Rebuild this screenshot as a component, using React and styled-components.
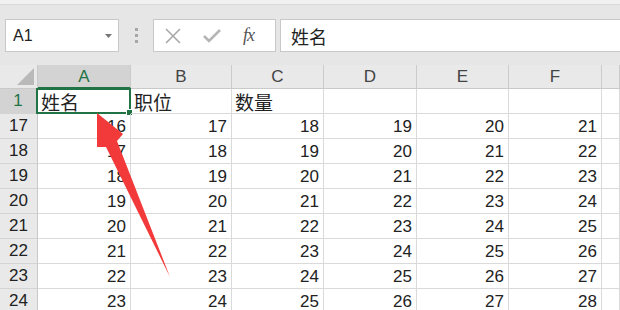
import React from 'react';
import styled, { createGlobalStyle } from 'styled-components';

const GlobalStyle = createGlobalStyle`
  html, body {
    margin: 0;
    padding: 0;
    background: #e6e6e6;
    overflow: hidden;
  }
  body {
    font-family: "Liberation Sans", "Noto Sans CJK SC", sans-serif;
  }
`;

const Page = styled.div`
  position: relative;
  width: 620px;
  height: 310px;
  overflow: hidden;
  background: #e6e6e6;
`;

// thin ribbon remnant at the very top
const TopStrip = styled.div`
  height: 4px;
  background: #f1f1f1;
  border-bottom: 1px solid #d9d9d9;
`;

const FormulaBar = styled.div`
  display: flex;
  align-items: flex-start;
  height: 46px;
  padding-top: 14px;
  padding-left: 5px;
`;

const NameBox = styled.div`
  box-sizing: border-box;
  width: 114px;
  height: 33px;
  background: #fff;
  border: 1px solid #c8c8c8;
  display: flex;
  align-items: center;
  justify-content: space-between;
  padding: 0 6px 0 7px;
  font-size: 16px;
  color: #222;
`;

const Grip = styled.div`
  width: 34px;
  height: 33px;
  display: flex;
  flex-direction: column;
  align-items: center;
  justify-content: center;
  gap: 3px;
`;

const GripDot = styled.span`
  width: 3px;
  height: 3px;
  background: #a6a6a6;
`;

const ButtonBox = styled.div`
  box-sizing: border-box;
  width: 123px;
  height: 33px;
  background: #fff;
  border: 1px solid #c8c8c8;
  display: flex;
  align-items: center;
  padding-left: 11px;
  gap: 22px;
`;

const Fx = styled.span`
  font-family: "Liberation Serif", serif;
  font-style: italic;
  font-size: 18px;
  color: #555;
  letter-spacing: -1px;
`;

const FormulaInput = styled.div`
  box-sizing: border-box;
  flex: 1;
  margin-left: 4px;
  margin-right: -4px;
  height: 33px;
  background: #fff;
  border: 1px solid #c8c8c8;
  display: flex;
  align-items: center;
  padding-left: 10px;
  font-size: 18px;
  color: #222;
`;

const Sheet = styled.div`
  display: grid;
  grid-template-columns: 38px 93px 101px 92px 93px 92px 93px 1fr;
  grid-template-rows: 24px repeat(9, 25px);
  background: #fff;
`;

const Corner = styled.div`
  background: #e9e9e9;
  border-right: 1px solid #c9c9c9;
  border-bottom: 1px solid #c9c9c9;
  display: flex;
  align-items: flex-end;
  justify-content: flex-end;
  padding: 0 3px 3px 0;
`;

const ColHead = styled.div`
  box-sizing: border-box;
  background: ${p => (p.$active ? '#d3d3d3' : '#e9e9e9')};
  color: ${p => (p.$active ? '#217346' : '#444')};
  border-right: 1px solid #cbcbcb;
  border-bottom: ${p => (p.$active ? '2px solid #217346' : '1px solid #c9c9c9')};
  display: flex;
  align-items: center;
  justify-content: center;
  font-size: 17px;
  padding-top: 1px;
`;

const RowHead = styled.div`
  box-sizing: border-box;
  background: ${p => (p.$active ? '#d3d3d3' : '#e9e9e9')};
  color: ${p => (p.$active ? '#217346' : '#222')};
  border-right: ${p => (p.$active ? '2px solid #217346' : '1px solid #c9c9c9')};
  border-bottom: 1px solid #d4d4d4;
  display: flex;
  align-items: center;
  justify-content: center;
  font-size: 17px;
`;

const Cell = styled.div`
  position: relative;
  box-sizing: border-box;
  border-right: 1px solid #dadada;
  border-bottom: 1px solid #dadada;
  display: flex;
  align-items: center;
  justify-content: ${p => (p.$num ? 'flex-end' : 'flex-start')};
  padding: ${p => (p.$num ? '1px 4px 0 0' : '1px 0 0 3px')};
  font-size: ${p => (p.$num ? '17px' : '19px')};
  color: #222;
  white-space: nowrap;
`;

const Selection = styled.div`
  position: absolute;
  left: -2px;
  top: -1px;
  right: -1px;
  bottom: -1px;
  border: 2px solid #217346;
  pointer-events: none;
`;

const FillHandle = styled.div`
  position: absolute;
  right: -4px;
  bottom: -4px;
  width: 5px;
  height: 5px;
  background: #217346;
  border: 1px solid #fff;
`;

const Arrow = styled.svg`
  position: absolute;
  left: 0;
  top: 0;
  pointer-events: none;
`;

const cols = ['A', 'B', 'C', 'D', 'E', 'F', ''];
const rows = [17, 18, 19, 20, 21, 22, 23, 24];

export default function App() {
  return (
    <Page>
      <GlobalStyle />
      <TopStrip />
      <FormulaBar>
        <NameBox>
          <span>A1</span>
          <svg width="7" height="4" viewBox="0 0 7 4">
            <path d="M0 0h7L3.5 4z" fill="#777" />
          </svg>
        </NameBox>
        <Grip>
          <GripDot />
          <GripDot />
          <GripDot />
        </Grip>
        <ButtonBox>
          <svg width="16" height="16" viewBox="0 0 16 16">
            <path d="M1 1L15 15M15 1L1 15" stroke="#a9a9a9" strokeWidth="1.6" fill="none" />
          </svg>
          <svg width="18" height="14" viewBox="0 0 18 14">
            <path d="M1 7l5 5L17 1" stroke="#b5b5b5" strokeWidth="2.6" fill="none" />
          </svg>
          <Fx>fx</Fx>
        </ButtonBox>
        <FormulaInput>姓名</FormulaInput>
      </FormulaBar>

      <Sheet>
        <Corner>
          <svg width="17" height="17" viewBox="0 0 17 17">
            <path d="M17 0V17H0z" fill="#b9b9b9" />
          </svg>
        </Corner>
        {cols.map((c, i) => (
          <ColHead key={i} $active={c === 'A'}>{c}</ColHead>
        ))}

        <RowHead $active>1</RowHead>
        <Cell>
          姓名
          <Selection>
            <FillHandle />
          </Selection>
        </Cell>
        <Cell>职位</Cell>
        <Cell>数量</Cell>
        <Cell />
        <Cell />
        <Cell />
        <Cell />

        {rows.map(r => (
          <React.Fragment key={r}>
            <RowHead>{r}</RowHead>
            {[0, 1, 2, 3, 4, 5].map(k => (
              <Cell key={k} $num>{r - 1 + k}</Cell>
            ))}
            <Cell />
          </React.Fragment>
        ))}
      </Sheet>

      <Arrow width="620" height="310" viewBox="0 0 620 310">
        <path
          d="M97 113 L123 134 L117 141 L170 277 L106 147 L97 147 Z"
          fill="#f23a3a"
        />
      </Arrow>
    </Page>
  );
}
